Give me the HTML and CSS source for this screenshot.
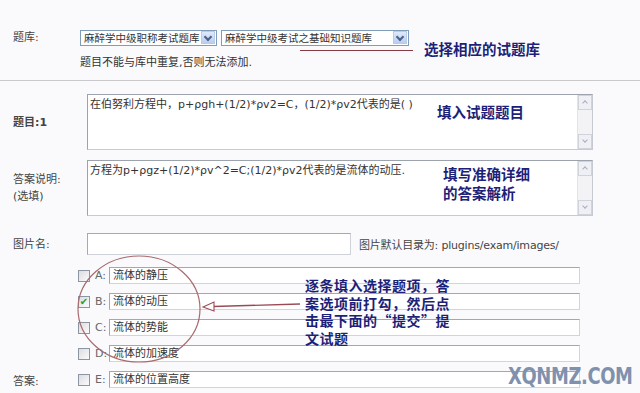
FILE: index.html
```html
<!DOCTYPE html>
<html lang="zh-CN">
<head>
    <meta charset="UTF-8">
    <title>添加试题</title>
    <link rel="stylesheet" href="styles.css">
</head>
<body>

    <div class="page">
        <div class="row lib-row">
            <div class="label lib-label">题库:</div>
            <div class="select sel-one">
                <span>麻醉学中级职称考试题库</span>
                <i class="drop"></i>
            </div>
            <div class="select sel-two">
                <span>麻醉学中级考试之基础知识题库</span>
                <i class="drop"></i>
            </div>
        </div>
        <div class="hint">题目不能与库中重复,否则无法添加.</div>

        <div class="sep"></div>

        <div class="row q-row">
            <div class="label"><b>题目:1</b></div>
            <div class="box">
                <div class="box-text">在伯努利方程中，p+ρgh+(1/2)*ρv2=C，(1/2)*ρv2代表的是( )</div>
                <div class="scroll"><i class="up"></i><i class="down"></i></div>
            </div>
        </div>

        <div class="row ex-row">
            <div class="label">答案说明:<br>(选填)</div>
            <div class="box">
                <div class="box-text">方程为p+ρgz+(1/2)*ρv^2=C;(1/2)*ρv2代表的是流体的动压.</div>
                <div class="scroll"><i class="up"></i><i class="down"></i></div>
            </div>
        </div>

        <div class="row img-row">
            <div class="label">图片名:</div>
            <div class="img-input"></div>
            <div class="img-note">图片默认目录为: plugins/exam/images/</div>
        </div>

        <div class="options">
            <div class="opt">
                <div class="opt-label"></div>
                <span class="check"></span><span class="letter">A:</span>
                <div class="opt-input">流体的静压</div>
            </div>
            <div class="opt">
                <div class="opt-label"></div>
                <span class="check checked">✔</span><span class="letter">B:</span>
                <div class="opt-input">流体的动压</div>
            </div>
            <div class="opt">
                <div class="opt-label"></div>
                <span class="check"></span><span class="letter">C:</span>
                <div class="opt-input">流体的势能</div>
            </div>
            <div class="opt">
                <div class="opt-label"></div>
                <span class="check"></span><span class="letter">D:</span>
                <div class="opt-input">流体的加速度</div>
            </div>
            <div class="opt">
                <div class="opt-label">答案:</div>
                <span class="check"></span><span class="letter">E:</span>
                <div class="opt-input">流体的位置高度</div>
            </div>
        </div>

        <!-- 标注 -->
        <div class="underline"></div>
        <div class="note note-lib">选择相应的试题库</div>
        <div class="note note-q">填入试题题目</div>
        <div class="note note-ex">填写准确详细<br>的答案解析</div>
        <div class="note note-opt">逐条填入选择题项，答<br>案选项前打勾，然后点<br>击最下面的“提交”提<br>文试题</div>

        <svg class="mark" width="640" height="393" viewBox="0 0 640 393">
            <ellipse cx="139" cy="309" rx="61" ry="53" fill="none" stroke="#a86a6e" stroke-width="1.2"/>
            <line x1="300" y1="304" x2="213" y2="306.5" stroke="#9a4a55" stroke-width="1.3"/>
            <polygon points="203,307 214,302 214,311" fill="#fff" stroke="#9a4a55" stroke-width="1.1"/>
        </svg>

        <div class="watermark">XQNMZ.COM</div>
    </div>

</body>
</html>
```

FILE: styles.css
```css
body {
    margin: 0;
    background-color: #fafafc;
    font-family: "DejaVu Sans", "Noto Sans CJK SC", sans-serif;
    font-size: 11px;
    color: #333;
}

.page {
    position: relative;
    width: 640px;
    height: 393px;
    overflow: hidden;
    padding-top: 29px;
    box-sizing: border-box;
}

.row {
    display: flex;
    align-items: center;
}

.label {
    width: 74px;
    padding-left: 13px;
    flex-shrink: 0;
    color: #444;
    line-height: 17px;
}

.lib-row {
    height: 17px;
}

.lib-label {
    width: 67px;
}

.select {
    display: flex;
    align-items: center;
    justify-content: space-between;
    box-sizing: border-box;
    height: 16px;
    border: 1px solid #7f9db9;
    background-color: #fff;
    padding: 0 1px 0 3px;
    color: #333;
    white-space: nowrap;
    overflow: hidden;
}

.select span {
    font-size: 10.5px;
    line-height: 14px;
}

.sel-one {
    width: 137px;
}

.sel-two {
    width: 188px;
    margin-left: 4px;
}

.drop {
    position: relative;
    flex-shrink: 0;
    width: 14px;
    height: 13px;
    border: 1px solid #b8cbeb;
    box-sizing: border-box;
    background: linear-gradient(to bottom, #dfe9fb, #b9cdf3);
}

.drop::after {
    content: "";
    position: absolute;
    left: 3px;
    top: 2px;
    width: 4px;
    height: 4px;
    border-right: 2px solid #4d6185;
    border-bottom: 2px solid #4d6185;
    transform: rotate(45deg);
}

.hint {
    margin-top: 10px;
    padding-left: 80px;
    line-height: 13px;
    color: #333;
}

.sep {
    margin-top: 11px;
    height: 1px;
    background-color: #c9c9cc;
}

.q-row {
    margin-top: 13px;
}

.ex-row {
    margin-top: 10px;
}

.box {
    position: relative;
    display: flex;
    width: 506px;
    height: 56px;
    box-sizing: border-box;
    border: 1px solid #9da3ad;
    border-right-color: #c6cad2;
    border-bottom-color: #c6cad2;
    background-color: #fff;
}

.box-text {
    flex: 1;
    padding: 3px 2px;
    line-height: 14px;
    color: #333;
}

.scroll {
    width: 14px;
    display: flex;
    flex-direction: column;
    justify-content: space-between;
    background-color: #f3f3f6;
    border-left: 1px solid #e2e3e8;
}

.scroll i {
    position: relative;
    display: block;
    height: 13px;
    border: 1px solid #d0d3dc;
    background-color: #eef0f5;
}

.scroll i::after {
    content: "";
    position: absolute;
    left: 4px;
    width: 3px;
    height: 3px;
    border-left: 1px solid #a9aeb9;
    border-top: 1px solid #a9aeb9;
}

.scroll .up::after {
    top: 5px;
    transform: rotate(45deg);
}

.scroll .down::after {
    top: 3px;
    transform: rotate(225deg);
}

.img-row {
    margin-top: 17px;
}

.img-input {
    width: 264px;
    height: 22px;
    box-sizing: border-box;
    border: 1px solid #a5a9b1;
    border-right-color: #cfd2d8;
    border-bottom-color: #cfd2d8;
    background-color: #fff;
}

.img-note {
    margin-left: 8px;
    color: #444;
    letter-spacing: -0.2px;
}

.options {
    margin-top: 12px;
    display: flex;
    flex-direction: column;
    gap: 9px;
}

.opt {
    display: flex;
    align-items: center;
    height: 17px;
}

.opt-label {
    width: 78px;
    padding-left: 13px;
    box-sizing: border-box;
    color: #444;
}

.check {
    width: 12px;
    height: 12px;
    box-sizing: border-box;
    border: 1px solid #8c96a3;
    background: linear-gradient(to bottom right, #dcdde2, #fbfbfc);
    font-size: 10px;
    line-height: 10px;
    text-align: center;
    color: #26a026;
}

.letter {
    width: 14px;
    margin-left: 5px;
    color: #666;
}

.opt-input {
    width: 471px;
    height: 17px;
    box-sizing: border-box;
    border: 1px solid #a3a7ae;
    border-right-color: #d2d4d9;
    border-bottom-color: #d2d4d9;
    background-color: #fff;
    padding-left: 3px;
    line-height: 15px;
    color: #333;
}

.underline {
    position: absolute;
    left: 300px;
    top: 50px;
    width: 113px;
    height: 1px;
    background-color: #8a3c46;
}

.note {
    position: absolute;
    font-family: "Noto Sans CJK SC", sans-serif;
    font-weight: bold;
    font-size: 14.5px;
    line-height: 18px;
    color: #1d1f78;
}

.note-lib {
    left: 424px;
    top: 40px;
}

.note-q {
    left: 437px;
    top: 103px;
}

.note-ex {
    left: 443px;
    top: 164px;
    line-height: 19px;
}

.note-opt {
    left: 305px;
    top: 277px;
    font-size: 14px;
    letter-spacing: 0.5px;
    line-height: 17.7px;
}

.mark {
    position: absolute;
    left: 0;
    top: 0;
    pointer-events: none;
}

.watermark {
    position: absolute;
    left: 508px;
    top: 363px;
    font-family: "DejaVu Sans", sans-serif;
    font-weight: bold;
    font-size: 23px;
    letter-spacing: -0.5px;
    color: #8091ad;
    transform: scaleX(0.78);
    transform-origin: left top;
}
```
